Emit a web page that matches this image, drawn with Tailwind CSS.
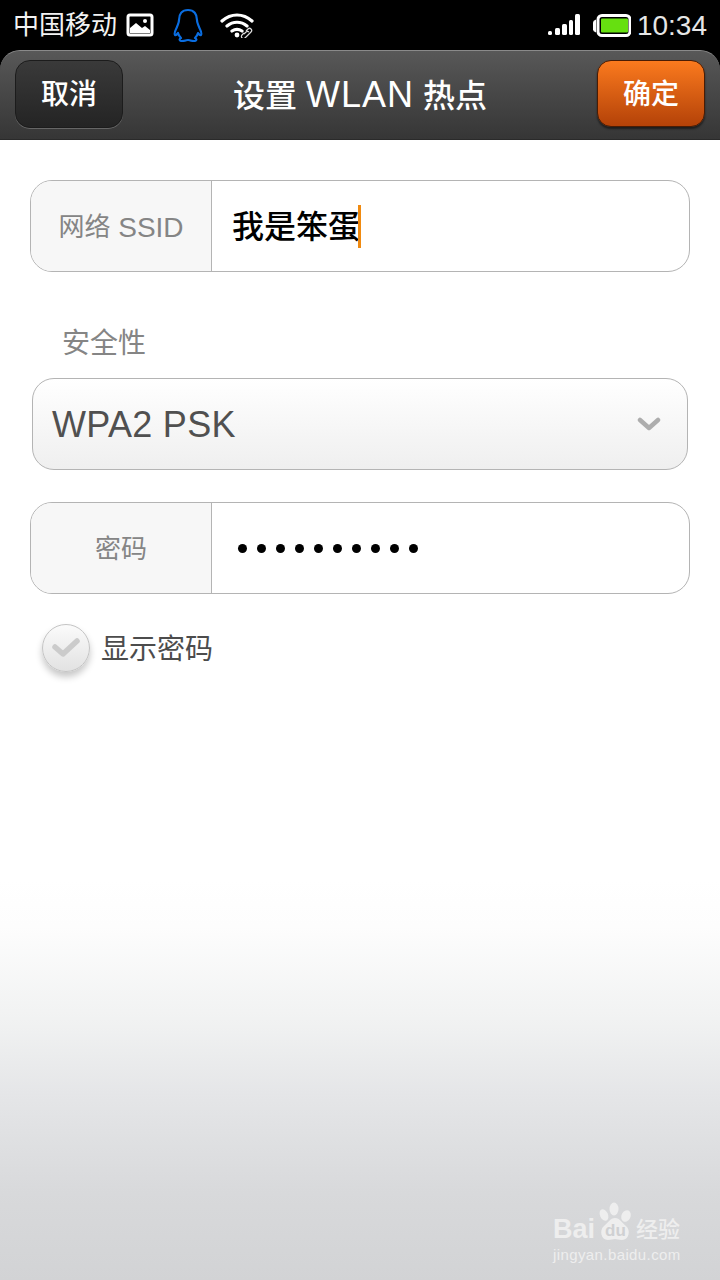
<!DOCTYPE html>
<html lang="zh-CN">
<head>
  <meta charset="UTF-8">
  <meta name="viewport" content="width=device-width, initial-scale=1.0">
  <title>设置 WLAN 热点</title>
  <script src="https://cdn.jsdelivr.net/npm/@tailwindcss/browser@4"></script>
</head>
<body class="font-['Liberation_Sans','Noto_Sans_CJK_SC',sans-serif]">
  <div class="relative w-[720px] h-[1280px] overflow-hidden flex flex-col bg-white">

    <!-- Status bar -->
    <div class="h-[50px] shrink-0 bg-black flex items-center text-white pl-[13px] pr-[13px]">
      <span class="text-[26px] leading-none text-[#f2f2f2]">中国移动</span>
      <svg class="ml-[8px]" width="30" height="24" viewBox="0 0 30 24">
        <rect x="3" y="2" width="24" height="20" rx="2" fill="#000" stroke="#fff" stroke-width="3"/>
        <path d="M5 20v-5l6-5 6 5 3-2 5 4v3z" fill="#fff"/>
        <circle cx="20" cy="8" r="2" fill="#fff"/>
      </svg>
      <svg class="ml-[17px]" width="32" height="34" viewBox="0 0 32 34">
        <path d="M16 2c-6 0-9 4-9 10 0 3-1 4-2 7-2 4-3 7-2 8 1 .6 2-.6 3-2 .5 2 1 3 3 5-2 1-2 3 1 3 3 0 5-1 6-1s3 1 6 1c3 0 3-2 1-3 2-2 2.500-3 3-5 1 1.400 2 2.600 3 2 1-1 0-4-2-8-1-3-2-4-2-7 0-6-3-10-9-10z" fill="none" stroke="#0a6de0" stroke-width="2.200" stroke-linejoin="round"/>
      </svg>
      <svg class="ml-[16px]" width="36" height="26" viewBox="0 0 36 26">
        <path d="M2 9c9-8 21-8 30 0M7 14c6-5 14-5 20 0M12 19c3-2 7-2 10 0" fill="none" stroke="#fff" stroke-width="3.200" stroke-linecap="round"/>
        <circle cx="17" cy="23" r="2.400" fill="#fff"/>
        <path d="M24 22l2-2a2.500 2.500 0 0 1 3 0M27 24l4-4a2 2 0 0 0-3-3l-2 2M24 21l-2 2a2 2 0 0 0 3 3l2-2" fill="none" stroke="#ddd" stroke-width="1.200"/>
      </svg>
      <div class="ml-auto flex items-center pt-[2px]">
        <svg width="34" height="24" viewBox="0 0 34 24">
          <rect x="1" y="17" width="4" height="4" rx="1.500" fill="#fff"/>
          <rect x="8" y="14" width="5" height="7" rx="1.500" fill="#fff"/>
          <rect x="15" y="10" width="5" height="11" rx="1.500" fill="#fff"/>
          <rect x="22" y="6" width="4" height="15" rx="1.500" fill="#fff"/>
          <rect x="28" y="0" width="5" height="21" rx="1.500" fill="#fff"/>
        </svg>
        <svg class="ml-[12px]" width="38" height="24" viewBox="0 0 38 24">
          <path d="M0 8.500q0-2 3-3v13q-3-1-3-3z" fill="#fff"/>
          <rect x="5" y="1.500" width="32" height="20" rx="4" fill="#000" stroke="#fff" stroke-width="3"/>
          <rect x="8" y="4.500" width="27" height="14" rx="1" fill="#66e010"/>
        </svg>
        <span class="ml-[6px] text-[28px] leading-none text-[#e6e6e6]">10:34</span>
      </div>
    </div>

    <!-- Title bar -->
    <div class="relative h-[90px] shrink-0 bg-black">
      <div class="h-full rounded-t-[20px] border-t border-t-[#8a8a8a] border-b border-b-[#2a2a2a] bg-gradient-to-b from-[#585858] to-[#363636] flex items-center justify-between pl-[15px] pr-[15px]">
        <button class="-mt-[2px] pt-[2px] w-[108px] h-[68px] rounded-[15px] border border-[#1c1c1c] bg-gradient-to-b from-[#3a3a3a] to-[#242424] shadow-[0_1px_0_#666] text-white text-[28px] font-medium">取消</button>
        <h1 class="text-white text-[32px] font-medium leading-none">设置 <span class="font-normal text-[36px] tracking-[1px]">WLAN</span> 热点</h1>
        <button class="-mt-[4px] pt-[3px] w-[108px] h-[67px] rounded-[14px] border border-[#4a1c04] bg-gradient-to-b from-[#fb7a1e] to-[#b44208] shadow-[0_2px_2px_rgba(0,0,0,0.5)] text-white text-[28px] font-medium">确定</button>
      </div>
    </div>

    <!-- Form -->
    <div class="flex-1 relative px-[30px] pt-[40px] bg-[linear-gradient(to_bottom,#ffffff_0,#ffffff_740px,#fdfdfd_787px,#f0f1f1_887px,#e5e6e8_953px,#d8d9db_1053px,#d2d3d5_1140px)]">
      <div class="h-[92px] rounded-[22px] border border-[#b4b4b4] flex overflow-hidden bg-white">
        <div class="w-[181px] shrink-0 bg-[#f7f7f7] border-r border-[#b4b4b4] flex items-center justify-center text-[#858585] text-[28px] pt-[3px]"><span class="text-[26px]">网络</span>&nbsp;SSID</div>
        <div class="flex-1 flex items-center pl-[20px] text-black text-[32px] font-medium pt-[2px]">
          <span>我是笨蛋</span><span class="-mt-[2px] -ml-[2px] w-[3px] h-[43px] bg-[#f08a10]"></span>
        </div>
      </div>

      <div class="pl-[32px] mt-[56px] text-[#858585] text-[28px] leading-[32px]">安全性</div>

      <div class="mx-[2px] mt-[18px] h-[92px] rounded-[22px] border border-[#b4b4b4] bg-gradient-to-b from-white to-[#efefef] flex items-center justify-between pl-[19px] pr-[26px] pt-[2px]">
        <span class="text-[#505050] text-[36px] tracking-[0.3px]">WPA2 PSK</span>
        <svg width="24" height="16" viewBox="0 0 24 16">
          <path d="M3 3l9 8 9-8" fill="none" stroke="#adadad" stroke-width="4.500" stroke-linecap="round" stroke-linejoin="round"/>
        </svg>
      </div>

      <div class="mt-[32px] h-[92px] rounded-[22px] border border-[#b4b4b4] flex overflow-hidden bg-white">
        <div class="w-[181px] shrink-0 bg-[#f7f7f7] border-r border-[#b4b4b4] flex items-center justify-center text-[#858585] text-[26px] pt-[3px]">密码</div>
        <div class="flex-1 flex items-center pl-[26px] gap-[10px]">
          <span class="size-[9px] rounded-full bg-black"></span>
          <span class="size-[9px] rounded-full bg-black"></span>
          <span class="size-[9px] rounded-full bg-black"></span>
          <span class="size-[9px] rounded-full bg-black"></span>
          <span class="size-[9px] rounded-full bg-black"></span>
          <span class="size-[9px] rounded-full bg-black"></span>
          <span class="size-[9px] rounded-full bg-black"></span>
          <span class="size-[9px] rounded-full bg-black"></span>
          <span class="size-[9px] rounded-full bg-black"></span>
          <span class="size-[9px] rounded-full bg-black"></span>
        </div>
      </div>

      <div class="mt-[30px] ml-[12px] flex items-center">
        <div class="size-[48px] rounded-full border border-[#c4c4c4] bg-gradient-to-b from-[#fbfbfb] to-[#e2e2e2] shadow-[0_5px_7px_rgba(0,0,0,0.22)] flex items-center justify-center">
          <svg width="30" height="22" viewBox="0 0 30 22">
            <path d="M4 10l8 7L26 4" fill="none" stroke="#cbcbcb" stroke-width="5.500" stroke-linecap="round" stroke-linejoin="round"/>
          </svg>
        </div>
        <span class="ml-[11px] text-[#4c4c4c] text-[28px] pt-[4px]">显示密码</span>
      </div>

      <!-- Watermark -->
      <div class="absolute left-[553px] top-[1062px] w-[130px] text-[#eeeeee]">
        <div class="flex items-end h-[42px]">
          <span class="text-[27px] font-bold leading-[30px]">Bai</span>
          <span class="relative ml-[1px] w-[38px] h-[42px] shrink-0">
            <svg class="absolute left-0 top-0" width="38" height="42" viewBox="0 0 36 42">
              <ellipse cx="7" cy="13" rx="4" ry="6" transform="rotate(-25 7 13)" fill="#eeeeee"/>
              <ellipse cx="17" cy="7" rx="4.500" ry="6.500" fill="#eeeeee"/>
              <ellipse cx="29" cy="14" rx="4.500" ry="6" transform="rotate(25 29 14)" fill="#eeeeee"/>
              <path d="M18 16c-5 0-7 5-11 8-5 4-3 14 4 14 3 0 5-1 7-1s4 1 7 1c7 0 9-10 4-14-4-3-6-8-11-8z" fill="#eeeeee"/>
            </svg>
            <span class="absolute left-[9px] top-[20px] text-[#cfd0d2] text-[17px] font-bold leading-none">du</span>
          </span>
          <span class="ml-[2px] text-[22px] font-medium leading-[28px] whitespace-nowrap">经验</span>
        </div>
        <div class="mt-[2px] text-[15px] leading-[18px] tracking-[0.4px] whitespace-nowrap">jingyan.baidu.com</div>
      </div>
    </div>
  </div>
</body>
</html>
